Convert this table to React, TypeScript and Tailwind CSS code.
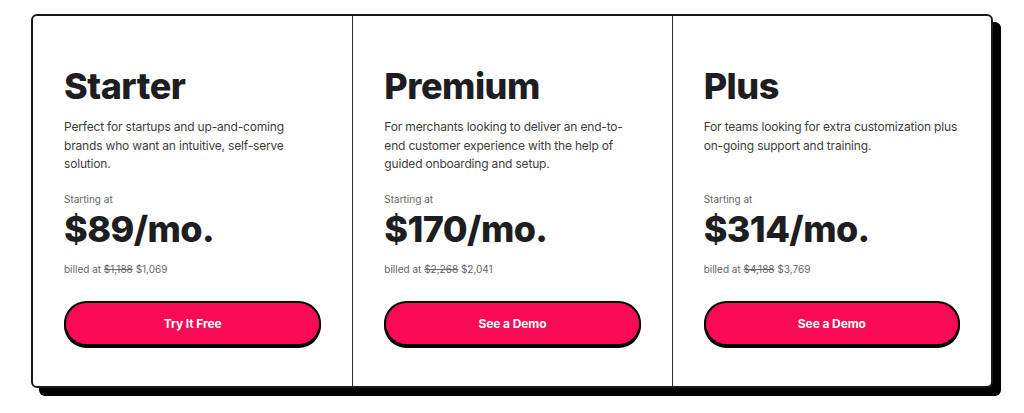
import React from "react";

const plans = [
  {
    name: "Starter",
    desc: "Perfect for startups and up-and-coming brands who want an intuitive, self-serve solution.",
    price: "$89/mo.",
    old: "$1,188",
    now: "$1,069",
    cta: "Try It Free",
  },
  {
    name: "Premium",
    desc: "For merchants looking to deliver an end-to-end customer experience with the help of guided onboarding and setup.",
    price: "$170/mo.",
    old: "$2,268",
    now: "$2,041",
    cta: "See a Demo",
  },
  {
    name: "Plus",
    desc: "For teams looking for extra customization plus on-going support and training.",
    price: "$314/mo.",
    old: "$4,188",
    now: "$3,769",
    cta: "See a Demo",
  },
];

export default function App() {
  return (
    <div className="w-[1024px] h-[413px] bg-white overflow-hidden font-['Inter',sans-serif]">
      <div className="ml-[31px] mt-[14px] w-[962px] h-[374px] border-2 border-[#1a1a1a] rounded-[6px] bg-white shadow-[8px_8px_0_0_#000] grid grid-cols-3">
        {plans.map((p, i) => (
          <div
            key={p.name}
            className={`flex flex-col pl-[31px] pr-[31px] pt-[48px] ${i > 0 ? "border-l border-[#333]" : ""}`}
          >
            <h2 className="text-[36px] leading-[44px] font-extrabold text-[#1e1e22] tracking-[-0.5px]">{p.name}</h2>
            <p className="mt-[10px] text-[12px] leading-[18.5px] text-[#3d3d3d] h-[56px] tracking-[-0.18px]">{p.desc}</p>
            <div className="mt-[17px] text-[10px] leading-[16px] text-[#666]">Starting at</div>
            <div className="text-[36px] leading-[44px] font-extrabold text-[#1e1e22] tracking-[-0.6px]">{p.price}</div>
            <div className="mt-[11px] text-[10px] leading-[14px] text-[#666]">
              billed at <span className="line-through">{p.old}</span> {p.now}
            </div>
            <button className="mt-[25px] h-[45px] w-full rounded-full bg-[#f80a54] border-2 border-black shadow-[0_2px_0_0_#000] text-white text-[12px] font-bold tracking-[-0.1px]">
              {p.cta}
            </button>
          </div>
        ))}
      </div>
    </div>
  );
}
